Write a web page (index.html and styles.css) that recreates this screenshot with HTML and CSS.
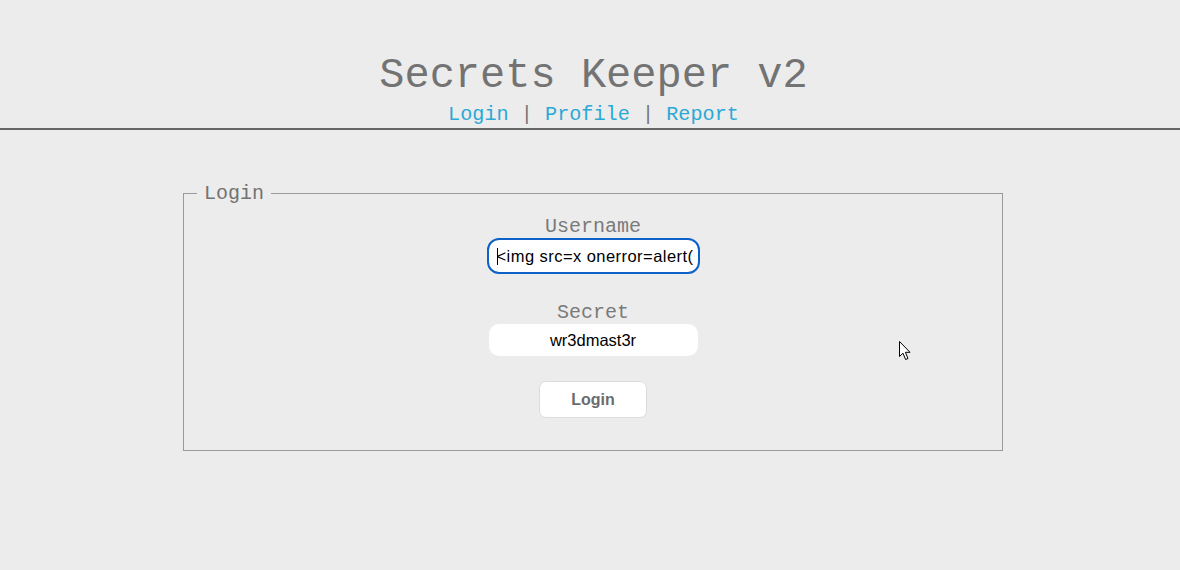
FILE: index.html
```html
<!DOCTYPE html>
<html lang="en">
<head>
  <meta charset="UTF-8" />
  <meta name="viewport" content="width=device-width, initial-scale=1.0"/>
  <title>Secrets Keeper v2</title>
  <link rel="stylesheet" href="styles.css">
</head>
<body>
  <div class="header">
    <h1>Secrets Keeper v2</h1>
    <nav class="nav">
      <a href="#">Login</a> | <a href="#">Profile</a> | <a href="#">Report</a>
    </nav>
  </div>

  <fieldset class="login-box">
    <legend>Login</legend>
    <form class="login-form">
      <label for="username">Username</label>
      <span class="field-wrap">
        <input id="username" class="field focused" type="text" value="<img src=x onerror=alert(">
        <span class="caret"></span>
      </span>

      <label for="secret">Secret</label>
      <input id="secret" class="field" type="text" value="wr3dmast3r">

      <button type="button" class="login-button">Login</button>
    </form>
  </fieldset>

  <svg class="pointer" width="13" height="20" viewBox="0 0 13 20">
    <path d="M0.5 0.5 L0.5 15.5 L4 12.2 L6.6 18.5 L9 17.5 L6.4 11.3 L11 11.3 Z" fill="#fff" stroke="#000" stroke-width="1"/>
  </svg>
</body>
</html>
```

FILE: styles.css
```css
body {
  margin: 0;
  background: #ececec;
  font-family: 'Liberation Mono', 'DejaVu Sans Mono', monospace;
  color: #737373;
  min-height: 570px;
  position: relative;
}

.header {
  text-align: center;
  padding: 53px 0 0 7px;
  border-bottom: 2px solid #666;
}

h1 {
  font-size: 42px;
  font-weight: normal;
  margin: 0;
  line-height: 47px;
  color: #737373;
}

.nav {
  font-size: 20.2px;
  line-height: 23px;
  padding-top: 3px;
  padding-bottom: 2px;
  color: #777;
}

.nav a {
  color: #2aa9d6;
  text-decoration: none;
}

.login-box {
  margin: 52px 177px 0 183px;
  padding: 0 13px 32px;
  border: 1px solid #9a9a9a;
}

.login-box legend {
  font-size: 20px;
  line-height: 23px;
  padding: 0 7px;
  color: #737373;
}

.login-form {
  display: flex;
  flex-direction: column;
  align-items: center;
}

.login-form label {
  font-size: 20px;
  line-height: 23px;
  color: #7a7a7a;
  margin-top: 10px;
  margin-bottom: 2px;
}

.login-form label[for="secret"] {
  margin-top: 29px;
  margin-bottom: 0;
}

.field-wrap {
  position: relative;
  display: block;
}

.field {
  width: 209px;
  height: 32px;
  box-sizing: border-box;
  border: none;
  border-radius: 10px;
  background: #fff;
  font-family: 'Liberation Sans', Arial, sans-serif;
  font-size: 16.5px;
  color: #000;
  text-align: center;
  padding: 0 8px;
}

.field.focused {
  outline: 2px solid #0d62c9;
  outline-offset: 0;
  text-align: left;
  letter-spacing: 0.45px;
  padding: 0 0 0 8px;
}

.caret {
  position: absolute;
  left: 8px;
  top: 8px;
  width: 1px;
  height: 17px;
  background: #000;
}

.login-button {
  margin-top: 25px;
  width: 108px;
  height: 37px;
  background: #fff;
  border: 1px solid #dcdcdc;
  border-radius: 7px;
  font-family: 'Liberation Sans', Arial, sans-serif;
  font-weight: bold;
  font-size: 16px;
  color: #6b6b6b;
}

.pointer {
  position: absolute;
  left: 899px;
  top: 341px;
}
```
